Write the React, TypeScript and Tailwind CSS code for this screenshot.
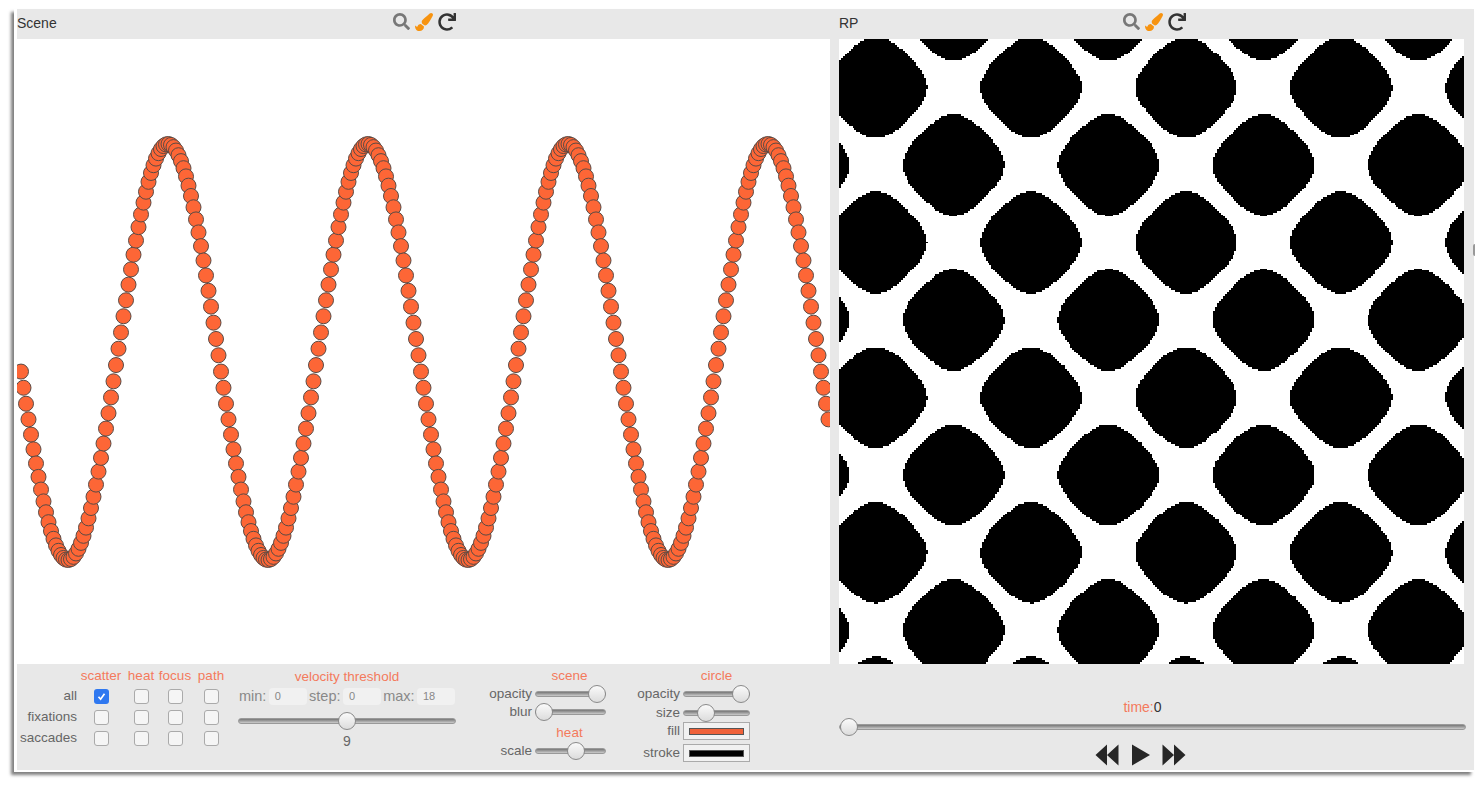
import { useMemo } from "react";
import { FaPaintBrush, FaRedo, FaSearch } from "react-icons/fa";

const SANS = { fontFamily: '"Liberation Sans", Arial, sans-serif' };

/* ========= Scene ========= */
function ScenePlot() {
  const points = useMemo(() => {
    const out: { x: number; y: number }[] = [];
    // one sample every 2.5px, same sine as the recurrence plot
    for (let i = 0; i < 324; i++) {
      const x = 4 + i * 2.5;
      const y = 313 - 208 * Math.cos((2 * Math.PI * (x - 151)) / 200);
      out.push({ x, y });
    }
    return out;
  }, []);

  return (
    <svg width={813} height={625} className="block bg-white">
      {points.map((p, i) => (
        <circle key={i} cx={p.x} cy={p.y} r={7.5} fill="#fd6636" stroke="#5a4a44" strokeWidth={1} />
      ))}
    </svg>
  );
}

/* ========= Recurrence plot ========= */
function RecurrencePlot() {
  const d = useMemo(() => {
    const n = 324;
    const step = 625 / n;
    const k = (2 * Math.PI) / 155;
    const threshold = 0.53;
    let path = "";
    for (let row = 0; row < n; row++) {
      const py = (row + 0.5) * step;
      const sy = Math.cos(k * (py - 48.5));
      let start = -1;
      for (let col = 0; col <= n; col++) {
        const px = (col + 0.5) * step;
        const black = col < n && Math.abs(Math.cos(k * (px - 37)) + sy) > threshold;
        if (black && start < 0) start = col;
        if (!black && start >= 0) {
          path += `M${start} ${row}H${col}V${row + 1}H${start}Z`;
          start = -1;
        }
      }
    }
    return path;
  }, []);

  return (
    <svg width={625} height={625} viewBox="0 0 324 324" shapeRendering="crispEdges" className="block bg-white">
      <path d={d} fill="#000" />
    </svg>
  );
}

/* ========= Small controls ========= */
function Toolbar() {
  return (
    <div className="mb-[5px] flex items-center">
      <FaSearch className="h-[17px] w-[17px] text-[#777]" />
      <FaPaintBrush className="ml-[5px] h-[18px] w-[18px] text-[#f7930f]" />
      <FaRedo className="ml-[5px] h-[18px] w-[18px] text-[#333]" />
    </div>
  );
}

function Checkbox({ checked }: { checked?: boolean }) {
  if (checked) {
    return (
      <div className="flex h-[15px] w-[15px] items-center justify-center rounded-[3px] bg-[#2f78f0]">
        <svg width="11" height="11" viewBox="0 0 11 11">
          <path d="M2.5 5.8 L4.6 8.2 L8.5 2.8" fill="none" stroke="#fff" strokeWidth="1.7" />
        </svg>
      </div>
    );
  }
  return <div className="h-[15px] w-[15px] rounded-[3px] border border-[#aaa] bg-[#f5f5f5]" />;
}

function Slider({ width, thumb }: { width: number; thumb: number }) {
  return (
    <div className="relative flex h-[18px] items-center" style={{ width }}>
      <div className="h-[6px] w-full rounded-[3px] border border-[#999] bg-gradient-to-b from-[#777] to-[#ccc]" />
      <div
        className="absolute top-0 h-[18px] w-[18px] rounded-full border border-[#8a8a8a] bg-gradient-to-b from-[#fafafa] to-[#dcdcdc]"
        style={{ left: thumb - 9 }}
      />
    </div>
  );
}

function NumberBox({ value }: { value: string }) {
  return (
    <div className="h-[17px] w-[38px] rounded-[4px] bg-[#f1f1f1] pl-[6px] text-[11px] leading-[17px] text-[#888]">
      {value}
    </div>
  );
}

function Heading({ children }: { children: string }) {
  return <div className="text-center text-[13.5px] leading-[19px] text-[#f47a5c]">{children}</div>;
}

function Label({ width, children }: { width: number; children: string }) {
  return (
    <div className="shrink-0 text-right text-[13.5px] leading-[18px] text-[#666]" style={{ width }}>
      {children}
    </div>
  );
}

function SliderRow({ label, labelWidth, sliderWidth, thumb }: { label: string; labelWidth: number; sliderWidth: number; thumb: number }) {
  return (
    <div className="flex h-[18px] items-center gap-[3px]">
      <Label width={labelWidth}>{label}</Label>
      <Slider width={sliderWidth} thumb={thumb} />
    </div>
  );
}

function ColorBox({ color }: { color: string }) {
  return (
    <div className="flex h-[18px] w-[67px] items-center justify-center border border-[#aaa] bg-[#f1f1f1]">
      <div className="h-[7px] w-[55px] border border-[#555]" style={{ backgroundColor: color }} />
    </div>
  );
}

/* ========= Control groups ========= */
const LAYERS = ["all", "fixations", "saccades"];

function LayerGrid() {
  return (
    <div className="grid h-[85px] w-[213px] grid-cols-[61px_46px_34px_34px_38px] grid-rows-[22px_21px_21px_21px] items-center justify-items-center">
      <div />
      {["scatter", "heat", "focus", "path"].map((h) => (
        <Heading key={h}>{h}</Heading>
      ))}
      {LAYERS.map((layer, r) => (
        <div key={layer} className="contents">
          <div className="mb-[2px] w-full pr-[1px] text-right text-[13.5px] leading-[18px] text-[#666]">{layer}</div>
          {[0, 1, 2, 3].map((c) => (
            <Checkbox key={c} checked={r === 0 && c === 0} />
          ))}
        </div>
      ))}
    </div>
  );
}

function VelocityGroup() {
  return (
    <div className="ml-[8px] flex w-[218px] flex-col">
      <div className="flex h-[24px] items-center justify-center">
        <Heading>velocity threshold</Heading>
      </div>
      <div className="flex h-[17px] items-center justify-between text-[14.5px] text-[#888]">
        <span className="ml-[1px]">min:</span>
        <NumberBox value="0" />
        <span>step:</span>
        <NumberBox value="0" />
        <span>max:</span>
        <div className="mr-[1px]">
          <NumberBox value="18" />
        </div>
      </div>
      <div className="mt-[7px]">
        <Slider width={218} thumb={109} />
      </div>
      <div className="mt-[3px] text-center text-[14px] leading-[16px] text-[#666]">9</div>
    </div>
  );
}

function SceneGroup() {
  return (
    <div className="ml-[24px] flex w-[126px] flex-col">
      <div className="h-[21px] pl-[53px] pt-[2px]">
        <Heading>scene</Heading>
      </div>
      <SliderRow label="opacity" labelWidth={52} sliderWidth={71} thumb={62} />
      <SliderRow label="blur" labelWidth={52} sliderWidth={71} thumb={9} />
      <div className="h-[21px] pl-[53px] pt-[2px]">
        <Heading>heat</Heading>
      </div>
      <SliderRow label="scale" labelWidth={52} sliderWidth={71} thumb={41} />
    </div>
  );
}

function CircleGroup() {
  return (
    <div className="ml-[24px] flex w-[120px] flex-col">
      <div className="h-[21px] pl-[53px] pt-[2px]">
        <Heading>circle</Heading>
      </div>
      <SliderRow label="opacity" labelWidth={50} sliderWidth={67} thumb={58} />
      <div className="mt-[1px]">
        <SliderRow label="size" labelWidth={50} sliderWidth={67} thumb={23} />
      </div>
      <div className="flex items-center gap-[3px]">
        <Label width={50}>fill</Label>
        <ColorBox color="#f0623a" />
      </div>
      <div className="mt-[4px] flex items-center gap-[3px]">
        <Label width={50}>stroke</Label>
        <ColorBox color="#000000" />
      </div>
    </div>
  );
}

function Transport() {
  return (
    <div className="mt-[7px] flex h-[24px] items-center justify-center pr-[24px]">
      <svg width="24" height="22" viewBox="0 0 24 22">
        <path d="M12 0.5V21.5L0.5 11ZM23.5 0.5V21.5L12 11Z" fill="#262626" />
      </svg>
      <svg width="20" height="22" viewBox="0 0 20 22" className="ml-[12px]">
        <path d="M1 0.5V21.5L19 11Z" fill="#262626" />
      </svg>
      <svg width="24" height="22" viewBox="0 0 24 22" className="ml-[11px]">
        <path d="M0.5 0.5V21.5L12 11ZM12 0.5V21.5L23.5 11Z" fill="#262626" />
      </svg>
    </div>
  );
}

/* ========= Main ========= */
export default function App() {
  return (
    <div className="h-[786px] w-[1478px] overflow-hidden bg-white pl-[14px] pt-[9px]" style={SANS}>
      <div className="relative flex h-[763px] w-[1460px] bg-white pb-[2px] pl-[3px] shadow-[-3px_3px_3px_rgba(0,0,0,0.5)]">
        {/* Scene column */}
        <div className="flex w-[813px] flex-col bg-[#e8e8e8]">
          <div className="flex h-[30px] shrink-0 items-center">
            <div className="mb-[2px] w-[376px] text-[14px] text-[#333]">Scene</div>
            <Toolbar />
          </div>
          <ScenePlot />
          <div className="flex flex-1 rounded-bl-[4px]">
            <LayerGrid />
            <VelocityGroup />
            <SceneGroup />
            <CircleGroup />
          </div>
        </div>

        {/* RP column */}
        <div className="flex w-[644px] flex-col bg-[#e8e8e8] pl-[9px]">
          <div className="flex h-[30px] shrink-0 items-center">
            <div className="mb-[2px] w-[284px] text-[14px] text-[#333]">RP</div>
            <Toolbar />
          </div>
          <RecurrencePlot />
          <div className="flex w-[627px] flex-col pt-[35px]">
            <div className="pr-[20px] text-center text-[14px] leading-[16px]">
              <span className="text-[#f47a5c]">time:</span>
              <span className="text-[#333]">0</span>
            </div>
            <div className="mt-[3px]">
              <Slider width={627} thumb={10} />
            </div>
            <Transport />
          </div>
        </div>

        {/* scrollbar sliver on the right edge */}
        <div className="absolute right-[-1px] top-[235px] h-[12px] w-[2px] rounded-l-full bg-[#999]" />
      </div>
    </div>
  );
}
